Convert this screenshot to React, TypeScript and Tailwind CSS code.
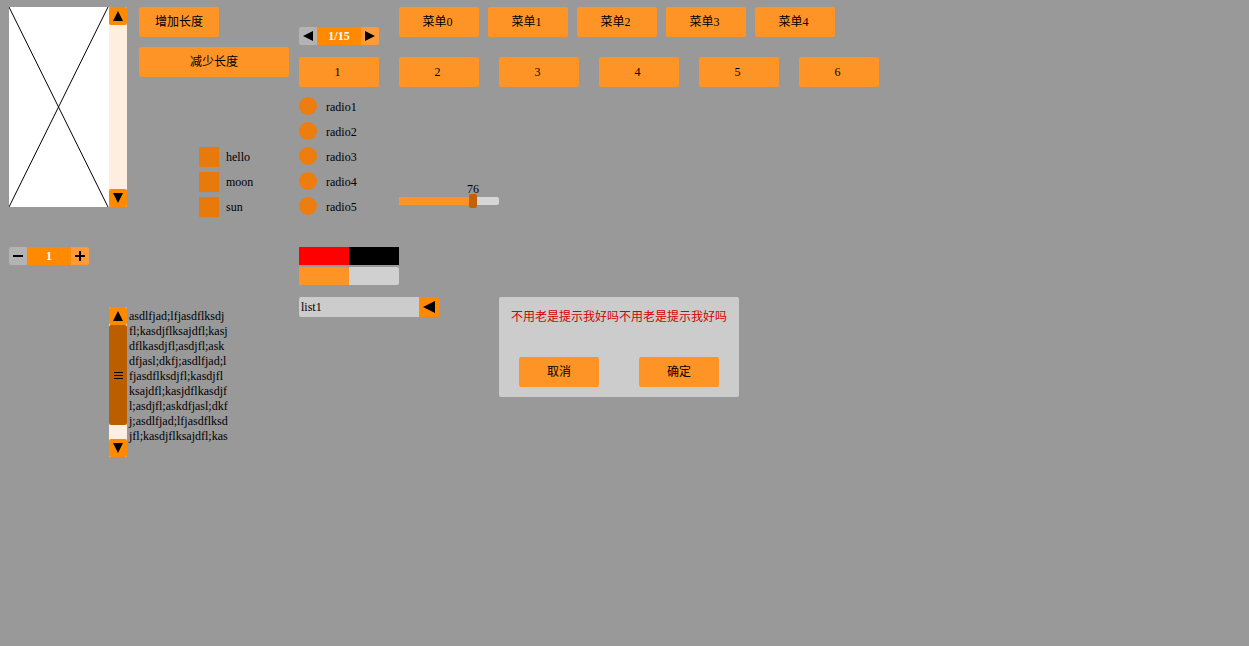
import type { ReactNode } from 'react';

const serif = { fontFamily: '"Liberation Serif", "Noto Sans CJK SC", serif' };

const textLines = [
  'asdlfjad;lfjasdflksdj',
  'fl;kasdjflksajdfl;kasj',
  'dflkasdjfl;asdjfl;ask',
  'dfjasl;dkfj;asdlfjad;l',
  'fjasdflksdjfl;kasdjfl',
  'ksajdfl;kasjdflkasdjf',
  'l;asdjfl;askdfjasl;dkf',
  'j;asdlfjad;lfjasdflksd',
  'jfl;kasdjflksajdfl;kas',
];

function Tri({ dir, size = 5 }: { dir: 'up' | 'down' | 'left' | 'right'; size?: number }) {
  const s = size * 2;
  const pts = {
    up: `0,${s} ${s / 2},0 ${s},${s}`,
    down: `0,0 ${s},0 ${s / 2},${s}`,
    left: `${s},0 0,${s / 2} ${s},${s}`,
    right: `0,0 ${s},${s / 2} 0,${s}`,
  }[dir];
  return (
    <svg width={s} height={s} viewBox={`0 0 ${s} ${s}`}>
      <polygon points={pts} fill="#000" />
    </svg>
  );
}

function Btn({ children, className = '' }: { children: ReactNode; className?: string }) {
  return (
    <div className={`flex h-[30px] items-center justify-center rounded-[2px] bg-[#ff9426] text-[12px] text-black ${className}`}>
      {children}
    </div>
  );
}

function Place({ x, y, children }: { x: number; y: number; children: ReactNode }) {
  return (
    <div className="absolute" style={{ left: x, top: y }}>
      {children}
    </div>
  );
}

export default function App() {
  return (
    <div className="relative h-[646px] w-[1249px] overflow-hidden bg-[#999999] text-[12px]" style={serif}>
      {/* picture + scroll bar */}
      <Place x={9} y={7}>
        <div className="flex">
          <svg width="100" height="200" className="bg-white">
            <line x1="0" y1="0" x2="99" y2="200" stroke="#000" strokeWidth="1" />
            <line x1="99" y1="0" x2="0" y2="200" stroke="#000" strokeWidth="1" />
          </svg>
          <div className="flex h-[200px] w-[18px] flex-col rounded-[2px] bg-[#fdeee0]">
            <div className="flex h-[18px] items-center justify-center rounded-[2px] bg-[#ff8a00]">
              <Tri dir="up" />
            </div>
            <div className="flex-1" />
            <div className="flex h-[18px] items-center justify-center rounded-[2px] bg-[#ff8a00]">
              <Tri dir="down" />
            </div>
          </div>
        </div>
      </Place>

      <Place x={139} y={7}>
        <div className="flex flex-col gap-[10px]">
          <Btn className="w-[80px]">增加长度</Btn>
          <Btn className="w-[150px]">减少长度</Btn>
        </div>
      </Place>

      {/* checkboxes */}
      <Place x={199} y={147}>
        <div className="flex flex-col gap-[5px]">
          {['hello', 'moon', 'sun'].map((t) => (
            <div key={t} className="flex h-[20px] items-center gap-[7px]">
              <div className="h-[20px] w-[20px] bg-[#e8790b]" />
              <span>{t}</span>
            </div>
          ))}
        </div>
      </Place>

      {/* pager */}
      <Place x={299} y={27}>
        <div className="flex h-[18px] w-[80px]">
          <div className="flex w-[18px] items-center justify-center rounded-l-[2px] bg-[#b3b3b3]">
            <Tri dir="left" />
          </div>
          <div className="flex flex-1 items-center justify-center bg-[#ff8a00] font-bold text-white">1/15</div>
          <div className="flex w-[18px] items-center justify-center rounded-r-[2px] bg-[#ff9b3b]">
            <Tri dir="right" />
          </div>
        </div>
      </Place>

      {/* menus */}
      <Place x={399} y={7}>
        <div className="flex gap-[9px]">
          {[0, 1, 2, 3, 4].map((i) => (
            <Btn key={i} className="w-[80px] pr-[3px]">菜单{i}</Btn>
          ))}
        </div>
      </Place>

      <Place x={299} y={57}>
        <div className="flex gap-[20px]">
          {[1, 2, 3, 4, 5, 6].map((i) => (
            <Btn key={i} className="w-[80px] pr-[3px]">{i}</Btn>
          ))}
        </div>
      </Place>

      {/* radios */}
      <Place x={299} y={97}>
        <div className="flex flex-col gap-[7px]">
          {[1, 2, 3, 4, 5].map((i) => (
            <div key={i} className="flex h-[18px] items-center gap-[9px]">
              <div className="h-[18px] w-[18px] rounded-full bg-[#ed7d0e]" />
              <span className="pt-[2px]">radio{i}</span>
            </div>
          ))}
        </div>
      </Place>

      {/* slider */}
      <Place x={399} y={182}>
        <div className="relative h-[26px] w-[100px]">
          <div className="absolute left-0 top-[15px] flex h-[8px] w-[100px] overflow-hidden rounded-[2px] bg-[#d6d6d6]">
            <div className="w-[72px] bg-[#ff9426]" />
          </div>
          <div className="absolute left-[70px] top-[12px] h-[14px] w-[8px] rounded-[2px] bg-[#c0620a]" />
          <div className="absolute left-[64px] top-[1px] w-[20px] text-center leading-[12px]">76</div>
        </div>
      </Place>

      {/* stepper */}
      <Place x={9} y={247}>
        <div className="flex h-[18px] w-[80px]">
          <div className="flex w-[18px] items-center justify-center rounded-l-[2px] bg-[#b3b3b3]">
            <div className="h-[2px] w-[10px] bg-black" />
          </div>
          <div className="flex flex-1 items-center justify-center bg-[#ff8a00] font-bold text-white">1</div>
          <div className="relative flex w-[18px] items-center justify-center rounded-r-[2px] bg-[#ff9b3b]">
            <div className="h-[2px] w-[10px] bg-black" />
            <div className="absolute h-[10px] w-[2px] bg-black" />
          </div>
        </div>
      </Place>

      {/* progress */}
      <Place x={299} y={247}>
        <div className="flex flex-col gap-[2px]">
          <div className="flex h-[18px] w-[100px]">
            <div className="w-[50px] bg-[#ff0000]" />
            <div className="w-[50px] bg-black" />
          </div>
          <div className="flex h-[18px] w-[100px] overflow-hidden rounded-[2px] bg-[#d0d0d0]">
            <div className="w-[50px] bg-[#ff9426]" />
          </div>
        </div>
      </Place>

      {/* list */}
      <Place x={299} y={297}>
        <div className="flex h-[20px]">
          <div className="flex w-[120px] items-center rounded-l-[2px] bg-[#cccccc] pl-[2px]">list1</div>
          <div className="flex w-[20px] items-center justify-center rounded-r-[2px] bg-[#ff8a00]">
            <Tri dir="left" size={6} />
          </div>
        </div>
      </Place>

      {/* dialog */}
      <Place x={499} y={297}>
        <div className="flex h-[100px] w-[240px] flex-col rounded-[2px] bg-[#cccccc] px-[12px] pt-[13px]">
          <div className="text-[12px] leading-[14px] text-[#d40000]">不用老是提示我好吗不用老是提示我好吗</div>
          <div className="mt-[33px] flex justify-between px-[8px]">
            <Btn className="w-[80px]">取消</Btn>
            <Btn className="w-[80px]">确定</Btn>
          </div>
        </div>
      </Place>

      {/* text scroller */}
      <Place x={109} y={307}>
        <div className="flex">
          <div className="flex h-[150px] w-[18px] flex-col rounded-[2px] bg-[#fdeee0]">
            <div className="flex h-[18px] items-center justify-center rounded-[2px] bg-[#ff8a00]">
              <Tri dir="up" />
            </div>
            <div className="flex h-[100px] items-center justify-center rounded-[2px] bg-[#bb5e00]">
              <svg width="9" height="7" viewBox="0 0 9 7">
                <rect x="0" y="0" width="9" height="1" fill="#000" />
                <rect x="0" y="3" width="9" height="1" fill="#000" />
                <rect x="0" y="6" width="9" height="1" fill="#000" />
              </svg>
            </div>
            <div className="flex-1" />
            <div className="flex h-[18px] items-center justify-center rounded-[2px] bg-[#ff8a00]">
              <Tri dir="down" />
            </div>
          </div>
          <div className="ml-[2px] mt-[2px] flex flex-col leading-[15px]">
            {textLines.map((l) => (
              <div key={l} className="whitespace-nowrap">{l}</div>
            ))}
          </div>
        </div>
      </Place>
    </div>
  );
}
